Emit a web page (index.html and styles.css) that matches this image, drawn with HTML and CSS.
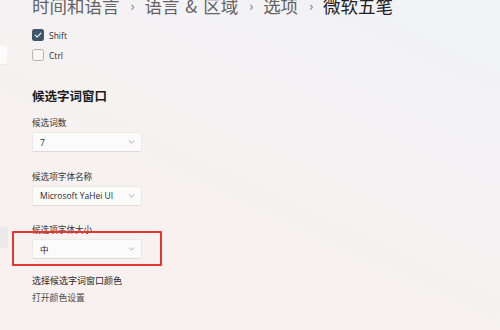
FILE: index.html
```html
<!DOCTYPE html>
<html lang="zh-CN">
<head>
<meta charset="utf-8">
<title>微软五笔</title>
<link rel="stylesheet" href="styles.css">
</head>
<body>
<div class="window">
  <aside class="sidebar">
    <div class="search-stub"></div>
    <div class="nav-stub"></div>
  </aside>
  <main class="content">
    <nav class="breadcrumb">
      <span class="crumb">时间和语言</span><span class="sep">›</span><span class="crumb amp-crumb">语言 &amp; 区域</span><span class="sep">›</span><span class="crumb">选项</span><span class="sep">›</span><span class="crumb current">微软五笔</span>
    </nav>
    <div class="checklist">
      <label class="check-row">
        <span class="checkbox checked">
          <svg viewBox="0 0 12 12" width="12" height="12"><path d="M3.2 6.2 L5.1 8.1 L8.9 4.2" fill="none" stroke="#ffffff" stroke-width="1.1" stroke-linecap="round" stroke-linejoin="round"/></svg>
        </span>
        <span class="check-label">Shift</span>
      </label>
      <label class="check-row">
        <span class="checkbox"></span>
        <span class="check-label">Ctrl</span>
      </label>
    </div>
    <h2 class="section-title">候选字词窗口</h2>
    <div class="field">
      <div class="field-label">候选词数</div>
      <div class="select"><span class="select-value">7</span><svg class="chev" viewBox="0 0 8 5" width="7" height="4"><path d="M1 1 L4 4 L7 1" fill="none" stroke="#8a8a8a" stroke-width="0.9" stroke-linecap="round" stroke-linejoin="round"/></svg></div>
    </div>
    <div class="field">
      <div class="field-label">候选项字体名称</div>
      <div class="select"><span class="select-value">Microsoft YaHei UI</span><svg class="chev" viewBox="0 0 8 5" width="7" height="4"><path d="M1 1 L4 4 L7 1" fill="none" stroke="#8a8a8a" stroke-width="0.9" stroke-linecap="round" stroke-linejoin="round"/></svg></div>
    </div>
    <div class="field">
      <div class="field-label">候选项字体大小</div>
      <div class="select highlighted"><span class="select-value">中</span><svg class="chev" viewBox="0 0 8 5" width="7" height="4"><path d="M1 1 L4 4 L7 1" fill="none" stroke="#8a8a8a" stroke-width="0.9" stroke-linecap="round" stroke-linejoin="round"/></svg><span class="annotation"></span></div>
    </div>
    <div class="color-setting">
      <div class="color-title">选择候选字词窗口颜色</div>
      <div class="color-link">打开颜色设置</div>
    </div>
  </main>
</div>
</body>
</html>
```

FILE: styles.css
```css
html, body {
  margin: 0;
  padding: 0;
  width: 500px;
  height: 330px;
  overflow: hidden;
}

body {
  font-family: "Open Sans", "Noto Sans CJK SC", sans-serif;
  background: linear-gradient(205deg, #f1f3f7 0%, #f5f2f3 40%, #f8f1f0 70%, #f9f1ef 100%);
  color: #1b1b1b;
}

.window {
  display: flex;
  height: 330px;
}

.sidebar {
  width: 8px;
  flex: none;
  display: flex;
  flex-direction: column;
}

.search-stub {
  margin-top: 46px;
  width: 7px;
  height: 18px;
  background: #fdfbfb;
  border-radius: 0 3px 3px 0;
  box-shadow: 0 1px 0 #ece7e7;
}

.nav-stub {
  margin-top: 163px;
  width: 8px;
  height: 21px;
  background: #ece8e8;
  border-radius: 0 3px 3px 0;
}

.content {
  padding-left: 24px;
  flex: 1;
}

.breadcrumb {
  margin-top: -5px;
  height: 22px;
  line-height: 22px;
  font-size: 17.5px;
  white-space: nowrap;
  color: #646464;
  font-family: "Noto Sans CJK SC", sans-serif;
}

.amp-crumb {
  word-spacing: 2px;
}

.crumb.current {
  color: #222222;
}

.sep {
  display: inline-block;
  margin: 0 10px 0 11px;
  font-size: 13px;
  color: #707070;
  vertical-align: top;
}

.checklist {
  margin-top: 8px;
  display: flex;
  flex-direction: column;
}

.check-row {
  display: flex;
  align-items: center;
  height: 20px;
}

.checkbox {
  width: 12px;
  height: 12px;
  box-sizing: border-box;
  border-radius: 2.5px;
  border: 1px solid #b7b3b3;
  background: #f9f6f6;
  display: flex;
  align-items: center;
  justify-content: center;
}

.checkbox.checked {
  border: none;
  background: #40566a;
}

.check-label {
  margin-left: 5px;
  font-size: 8.5px;
  color: #2a2a2a;
}

.section-title {
  margin: 22px 0 0;
  height: 18px;
  line-height: 18px;
  font-size: 12.5px;
  font-weight: 600;
  color: #1b1b1b;
  font-family: "Noto Sans CJK SC", sans-serif;
}

.field {
  margin-top: 10px;
}

.field + .field {
  margin-top: 16.5px;
}

.field-label {
  height: 14px;
  line-height: 14px;
  font-size: 8.6px;
  color: #333333;
  font-family: "Noto Sans CJK SC", sans-serif;
}

.select {
  position: relative;
  margin-top: 3px;
  width: 110px;
  height: 20px;
  box-sizing: border-box;
  background: #fcfbfb;
  border: 1px solid #ebe8e8;
  border-bottom-color: #dedada;
  border-radius: 2.5px;
  display: flex;
  align-items: center;
  padding: 0 6px 0 7px;
}

.select-value {
  flex: 1;
  font-size: 8.5px;
  color: #2a2a2a;
  font-family: "Open Sans", "Noto Sans CJK SC", sans-serif;
}

.chev {
  flex: none;
}

.annotation {
  position: absolute;
  left: -21px;
  top: -9px;
  width: 150px;
  height: 35px;
  box-sizing: border-box;
  border: 2px solid #e5352f;
  border-radius: 1px;
}

.color-setting {
  margin-top: 15px;
  font-family: "Noto Sans CJK SC", sans-serif;
}

.color-title {
  height: 14px;
  line-height: 14px;
  font-size: 9px;
  color: #1f1f1f;
}

.color-link {
  margin-top: 3px;
  height: 14px;
  line-height: 14px;
  font-size: 8.8px;
  color: #4a4a4a;
}
```
